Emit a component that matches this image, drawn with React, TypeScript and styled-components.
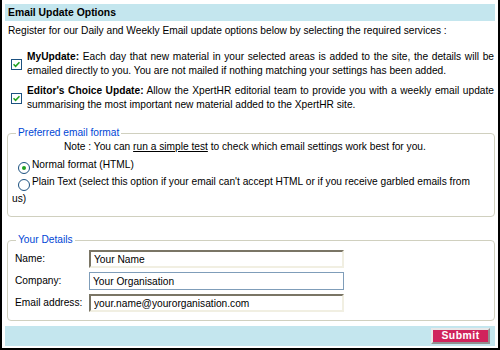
import React from "react";
import styled, { createGlobalStyle } from "styled-components";

const Global = createGlobalStyle`
  html, body { margin: 0; padding: 0; background: #ffffff; }
  body { font-family: "Liberation Sans", Arial, sans-serif; font-size: 10.2px; color: #000; }
`;

const Frame = styled.div`
  width: 500px;
  height: 350px;
  box-sizing: border-box;
  border-left: 2px solid #000;
  border-right: 2px solid #000;
  border-bottom: 2px solid #000;
  padding: 4px 3px 3px 3px;
  display: flex;
  flex-direction: column;
  font-family: "Liberation Sans", Arial, sans-serif;
  font-size: 10.2px;
`;

const Header = styled.div`
  flex: none;
  height: 17px;
  line-height: 17px;
  background: #c4e6ee;
  padding-left: 3px;
  font-weight: bold;
  font-size: 10.4px;
`;

const Intro = styled.div`
  margin-top: 3px;
  padding-left: 3px;
  line-height: 14px;
`;

const OptionList = styled.div`
  margin-top: 12px;
  display: flex;
  flex-direction: column;
  gap: 6px;
`;

const OptionRow = styled.div`
  display: grid;
  grid-template-columns: 22px 1fr;
  align-items: center;
`;

const CheckBox = styled.span`
  margin-left: 6px;
  width: 9px;
  height: 9px;
  border: 1px solid #1c5180;
  background: #fff;
  display: flex;
  align-items: center;
  justify-content: center;
`;

const OptionText = styled.div`
  line-height: 14px;
  text-align: justify;
  padding-right: 1px;
`;

const Fieldset = styled.fieldset<{ $top: number; $bottomPad: number }>`
  flex: none;
  margin: ${(p) => p.$top}px 0 0 2px;
  padding: 0 0 ${(p) => p.$bottomPad}px 0;
  border: 1px solid #d0d0bf;
  border-radius: 4px;
  min-width: 0;
`;

const Legend = styled.legend`
  margin-left: 8px;
  padding: 0 2px;
  color: #0046d5;
  line-height: 14px;
`;

const Note = styled.div`
  padding-left: 56px;
  line-height: 14px;
`;

const Link = styled.a`
  color: #000;
  text-decoration: underline;
`;

const RadioBlock = styled.div`
  margin-top: 3px;
  padding-left: 4px;
  padding-right: 18px;
  line-height: 15px;
`;

const RadioLine = styled.div``;

const Radio = styled.span<{ $checked?: boolean }>`
  display: inline-flex;
  vertical-align: -2px;
  margin-left: 6px;
  margin-right: 2px;
  width: 10px;
  height: 10px;
  border: 1px solid #1c5180;
  border-radius: 50%;
  background: #fff;
  align-items: center;
  justify-content: center;
  &::after {
    content: "";
    width: 4px;
    height: 4px;
    border-radius: 50%;
    background: ${(p) => (p.$checked ? "#21a121" : "transparent")};
  }
`;

const DetailsGrid = styled.div`
  margin-top: 3px;
  padding-left: 7px;
  display: grid;
  grid-template-columns: 74px 255px;
  row-gap: 4px;
  align-items: center;
`;

const Label = styled.label`
  line-height: 18px;
`;

const Input = styled.input<{ $focus?: boolean }>`
  box-sizing: border-box;
  width: 255px;
  height: 18px;
  margin: 0;
  padding: 0 3px;
  font-family: "Liberation Sans", Arial, sans-serif;
  font-size: 10.2px;
  color: #000;
  background: #fff;
  outline: none;
  border: ${(p) => (p.$focus ? "1px solid" : "2px solid")};
  border-color: ${(p) =>
    p.$focus ? "#7f9db9" : "#7a7565 #f1efe2 #f1efe2 #7a7565"};
`;

const Bar = styled.div`
  flex: none;
  margin-top: 5px;
  height: 20px;
  background: #c4e6ee;
  display: flex;
  justify-content: flex-end;
  align-items: center;
  padding-right: 5px;
`;

const SubmitButton = styled.button`
  box-sizing: border-box;
  width: 59px;
  height: 16px;
  padding: 0;
  background: #d0245c;
  color: #fff;
  font-family: "Liberation Sans", Arial, sans-serif;
  font-weight: bold;
  font-size: 10.4px;
  letter-spacing: 0.5px;
  border: 2px solid;
  border-color: #e8e8e8 #909090 #909090 #e8e8e8;
  line-height: 12px;
`;

function Check() {
  return (
    <svg width="7" height="7" viewBox="0 0 7 7">
      <path d="M0.5 3.2 L2.6 5.3 L6.5 1.2" stroke="#21a121" strokeWidth="1.6" fill="none" />
    </svg>
  );
}

export default function App() {
  return (
    <>
      <Global />
      <Frame>
        <Header>Email Update Options</Header>
        <Intro>
          Register for our Daily and Weekly Email update options below by selecting the required services :
        </Intro>
        <OptionList>
          <OptionRow>
            <CheckBox>
              <Check />
            </CheckBox>
            <OptionText>
              <b>MyUpdate:</b> Each day that new material in your selected areas is added to the site, the details will be emailed directly to you. You are not mailed if nothing matching your settings has been added.
            </OptionText>
          </OptionRow>
          <OptionRow>
            <CheckBox>
              <Check />
            </CheckBox>
            <OptionText>
              <b>Editor's Choice Update:</b> Allow the XpertHR editorial team to provide you with a weekly email update summarising the most important new material added to the XpertHR site.
            </OptionText>
          </OptionRow>
        </OptionList>
        <Fieldset $top={14} $bottomPad={10}>
          <Legend>Preferred email format</Legend>
          <Note>
            Note : You can <Link href="#">run a simple test</Link> to check which email settings work best for you.
          </Note>
          <RadioBlock>
            <RadioLine>
              <Radio $checked />Normal format (HTML)
            </RadioLine>
            <RadioLine>
              <Radio />Plain Text (select this option if your email can't accept HTML or if you receive garbled emails from us)
            </RadioLine>
          </RadioBlock>
        </Fieldset>
        <Fieldset $top={16} $bottomPad={8}>
          <Legend>Your Details</Legend>
          <DetailsGrid>
            <Label>Name:</Label>
            <Input defaultValue="Your Name" />
            <Label>Company:</Label>
            <Input $focus defaultValue="Your Organisation" />
            <Label>Email address:</Label>
            <Input defaultValue="your.name@yourorganisation.com" />
          </DetailsGrid>
        </Fieldset>
        <Bar>
          <SubmitButton>Submit</SubmitButton>
        </Bar>
      </Frame>
    </>
  );
}
